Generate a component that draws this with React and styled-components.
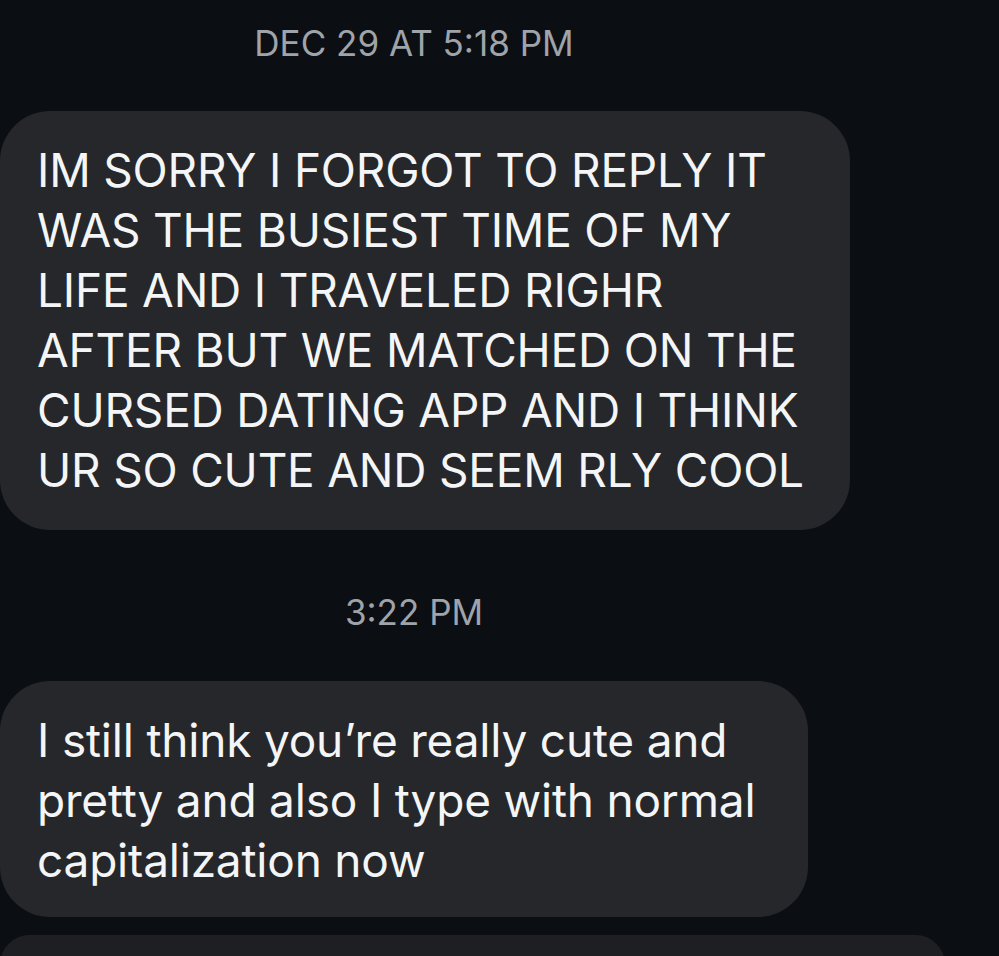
import React from 'react';
import styled, { createGlobalStyle } from 'styled-components';

const GlobalStyle = createGlobalStyle`
    html, body {
        margin: 0;
        padding: 0;
        background: #0b0e12;
        overflow: hidden;
    }
`;

const Thread = styled.div`
    width: 999px;
    height: 956px;
    overflow: hidden;
    display: flex;
    flex-direction: column;
    font-family: Inter, "Liberation Sans", sans-serif;
    -webkit-font-smoothing: antialiased;
`;

const Stamp = styled.div`
    width: 828px;
    text-align: center;
    color: #9fa3aa;
    font-size: 35px;
    line-height: 40px;
    letter-spacing: 0;
    margin-top: ${(p) => p.$top}px;
    margin-bottom: ${(p) => p.$bottom}px;
`;

const Bubble = styled.div`
    align-self: flex-start;
    width: ${(p) => p.$width}px;
    box-sizing: border-box;
    background: ${(p) => (p.$dim ? '#1d1f23' : '#25272b')};
    border-radius: 50px;
    padding: 29px 0 ${(p) => p.$bottom}px 37px;
    color: #f4f5f6;
    font-size: 46px;
    line-height: 60px;
    letter-spacing: -0.2px;
    white-space: pre-line;
    margin-bottom: ${(p) => p.$gap || 0}px;
`;

const App = () => {
    return (
        <>
            <GlobalStyle />
            <Thread>
                <Stamp $top={23} $bottom={48}>DEC 29 AT 5:18 PM</Stamp>
                <Bubble $width={850} $bottom={30}>
                    {'IM SORRY I FORGOT TO REPLY IT\nWAS THE BUSIEST TIME OF MY\nLIFE AND I TRAVELED RIGHR\nAFTER BUT WE MATCHED ON THE\nCURSED DATING APP AND I THINK\nUR SO CUTE AND SEEM RLY COOL'}
                </Bubble>
                <Stamp $top={62} $bottom={49}>3:22 PM</Stamp>
                <Bubble $width={808} $bottom={27} $gap={18}>
                    {'I still think you\u2019re really cute and\npretty and also I type with normal\ncapitalization now'}
                </Bubble>
                <Bubble $width={945} $bottom={30} $dim>
                    {' '}
                </Bubble>
            </Thread>
        </>
    );
};

export default App;
